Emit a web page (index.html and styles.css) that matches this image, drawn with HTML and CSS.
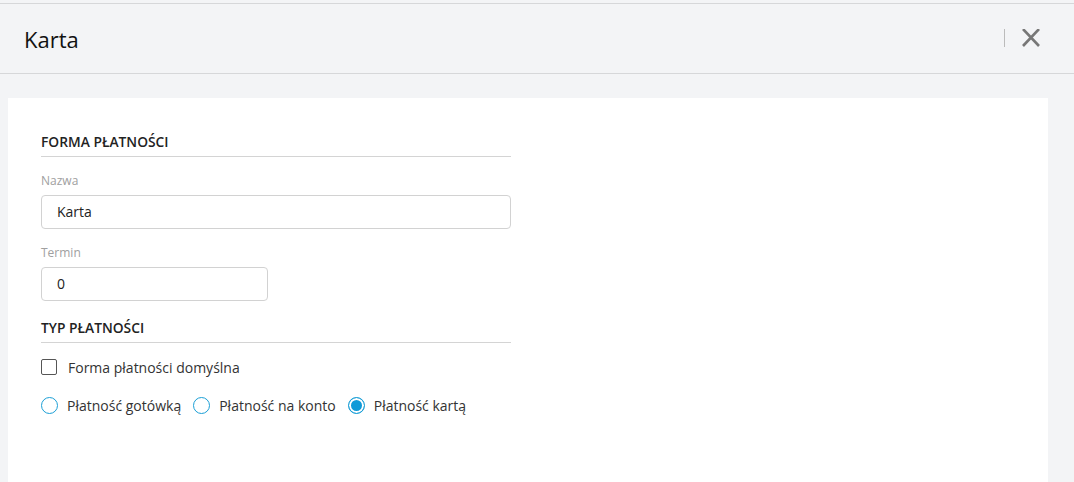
FILE: index.html
```html
<!doctype html>
<html lang="pl">
<head>
  <meta charset="UTF-8">
  <title>Karta</title>
  <link rel="stylesheet" href="styles.css">
</head>
<body>
<div class="header">
  <h2>Karta</h2>
  <div class="tools">
    <span class="sep"></span>
    <svg class="close" width="20" height="18" viewBox="0 0 20 18">
      <path d="M2 0 L18 17 M18 0 L2 17" stroke="#777" stroke-width="2.6" fill="none"/>
    </svg>
  </div>
</div>
<div class="panel">
  <div class="form">
    <h4 class="section">FORMA PŁATNOŚCI</h4>
    <label class="lbl">Nazwa</label>
    <div class="input wide">Karta</div>
    <label class="lbl">Termin</label>
    <div class="input short">0</div>
    <h4 class="section second">TYP PŁATNOŚCI</h4>
    <div class="check">
      <span class="box"></span>
      <span>Forma płatności domyślna</span>
    </div>
    <div class="radios">
      <div class="radio"><span class="dot"></span><span>Płatność gotówką</span></div>
      <div class="radio"><span class="dot"></span><span>Płatność na konto</span></div>
      <div class="radio on"><span class="dot"></span><span>Płatność kartą</span></div>
    </div>
  </div>
</div>
</body>
</html>
```

FILE: styles.css
```css
* {
  margin: 0;
  padding: 0;
  box-sizing: border-box;
}

body {
  background: #f3f4f6;
  font-family: "Open Sans", "Liberation Sans", sans-serif;
  color: #222;
  padding-top: 3px;
  height: 482px;
  overflow: hidden;
}

.header {
  height: 71px;
  border-top: 1px solid #d6d7d9;
  border-bottom: 1px solid #d6d7d9;
  display: flex;
  align-items: center;
  justify-content: space-between;
  padding: 0 33px 0 24px;
}

.header h2 {
  font-size: 22px;
  font-weight: 500;
  color: #111;
  margin-top: 0;
}

.tools {
  display: flex;
  align-items: center;
  margin-top: -2px;
}

.sep {
  width: 1px;
  height: 18px;
  background: #bbb;
  margin-right: 16px;
}

.panel {
  background: #fff;
  margin: 24px 26px 0 8px;
  height: 400px;
  padding: 34px 0 0 33px;
}

.form {
  width: 470px;
}

.section {
  font-size: 13.8px;
  font-weight: 600;
  line-height: 20px;
  padding-bottom: 4px;
  border-bottom: 1px solid #d4d4d4;
  color: #222;
}

.section.second {
  margin-top: 17px;
}

.lbl {
  display: block;
  font-size: 12px;
  line-height: 16px;
  color: #a0a0a0;
  margin-top: 16px;
}

.input {
  margin-top: 6px;
  height: 34px;
  border: 1px solid #d2d2d2;
  border-radius: 4px;
  font-size: 14px;
  line-height: 32px;
  padding-left: 15px;
  color: #222;
}

.input.wide {
  width: 470px;
}

.input.short {
  width: 227px;
}

.check {
  margin-top: 16px;
  display: flex;
  align-items: center;
  font-size: 14px;
  color: #333;
  height: 16px;
}

.check .box {
  width: 16px;
  height: 16px;
  border: 1px solid #555;
  border-radius: 2px;
  margin-right: 11px;
}

.radios {
  display: flex;
  margin-top: 22px;
  font-size: 14px;
  color: #333;
  height: 16px;
  align-items: center;
}

.radio {
  display: flex;
  align-items: center;
  margin-right: 12px;
}

.radio .dot {
  width: 17px;
  height: 17px;
  border: 1px solid #1b9fd6;
  border-radius: 50%;
  margin-right: 9px;
}

.radio.on .dot {
  background: #0f9ad8;
  box-shadow: inset 0 0 0 2px #fff;
}
```
